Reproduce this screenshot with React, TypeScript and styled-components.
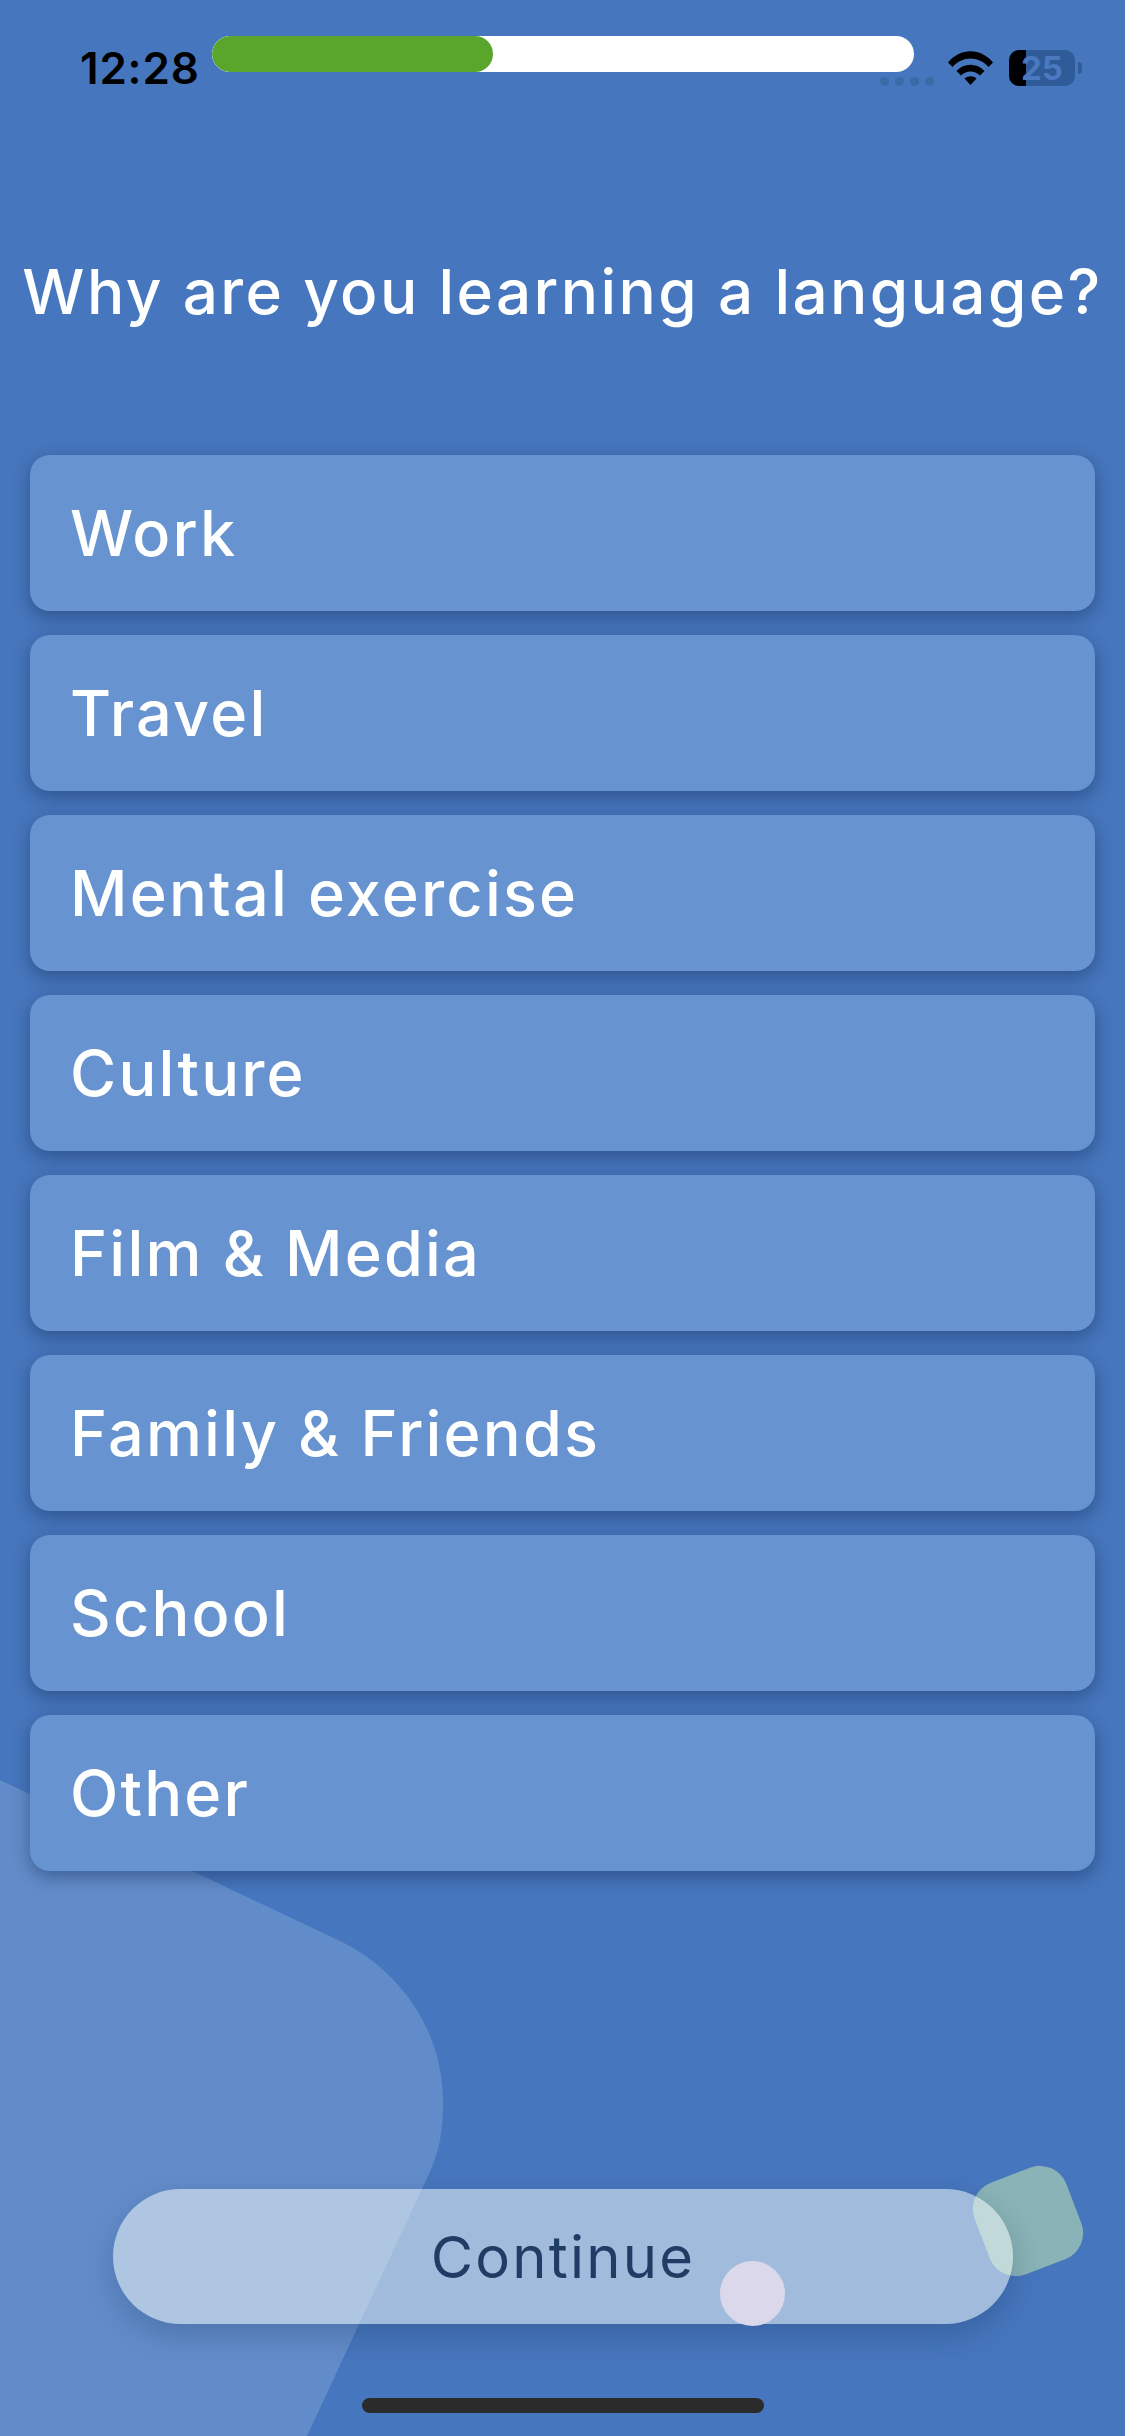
import React from 'react'
import styled, { createGlobalStyle } from 'styled-components'

const OPTIONS = ['Work', 'Travel', 'Mental exercise', 'Culture', 'Film & Media', 'Family & Friends', 'School', 'Other']

const GlobalStyle = createGlobalStyle`
  html, body {
    margin: 0;
    padding: 0;
    background: #4676bd;
  }
  * {
    box-sizing: border-box;
  }
`

const Screen = styled.div`
  position: relative;
  width: 1125px;
  height: 2436px;
  overflow: hidden;
  background: #4676bd;
  font-family: Inter, 'Liberation Sans', sans-serif;
`

const Blob = styled.svg`
  position: absolute;
  left: 0;
  top: 0;
`

const GreenSquare = styled.div`
  position: absolute;
  left: 979px;
  top: 2172px;
  width: 98px;
  height: 98px;
  border-radius: 28px;
  background: #89b3b6;
  transform: rotate(-21deg);
`

const Dot = styled.div`
  position: absolute;
  left: 720px;
  top: 2261px;
  width: 65px;
  height: 65px;
  border-radius: 50%;
  background: #dcd8ec;
  z-index: 2;
`

const Content = styled.div`
  position: relative;
  z-index: 1;
  display: flex;
  flex-direction: column;
  height: 100%;
`

const StatusBar = styled.div`
  display: flex;
  justify-content: space-between;
  align-items: center;
  height: 36px;
  margin-top: 50px;
  padding: 0 43px 0 80px;
`

const Time = styled.span`
  font-size: 44px;
  font-weight: 600;
  line-height: 36px;
  color: #000;
  letter-spacing: 0.8px;
`

const StatusIcons = styled.div`
  display: flex;
  align-items: center;
`

const SignalDots = styled.div`
  display: flex;
  gap: 6px;
  margin: 26px 14px 0 0;
`

const SignalDot = styled.i`
  display: block;
  width: 9px;
  height: 9px;
  border-radius: 50%;
  background: #3c6aa6;
`

const Battery = styled.div`
  position: relative;
  display: flex;
  align-items: center;
  justify-content: center;
  width: 66px;
  height: 36px;
  margin-left: 16px;
  border-radius: 10px;
  background: #2f5b98;
`

const BatteryLevel = styled.div`
  position: absolute;
  left: 0;
  top: 0;
  bottom: 0;
  width: 17px;
  border-radius: 10px 0 0 10px;
  background: #000;
`

const BatteryText = styled.span`
  position: relative;
  font-size: 33px;
  font-weight: 700;
  line-height: 36px;
  color: #4a79bf;
`

const BatteryNub = styled.div`
  width: 4px;
  height: 12px;
  margin-left: 3px;
  border-radius: 0 4px 4px 0;
  background: #2f5b98;
`

const Progress = styled.div`
  position: absolute;
  left: 212px;
  top: 36px;
  width: 702px;
  height: 36px;
  border-radius: 18px;
  background: #fff;
  overflow: hidden;
`

const ProgressFill = styled.div`
  height: 100%;
  border-radius: 18px;
  background: #5aa52c;
`

const Title = styled.h1`
  margin: 168px 0 0;
  font-size: 62px;
  font-weight: 500;
  line-height: 76px;
  letter-spacing: 2.4px;
  color: #fff;
  text-align: center;
  white-space: nowrap;
`

const OptionList = styled.div`
  display: flex;
  flex-direction: column;
  gap: 24px;
  margin: 125px 30px 0;
`

const Option = styled.div`
  display: flex;
  align-items: center;
  height: 156px;
  padding-left: 40px;
  border-radius: 20px;
  background: #6793d0;
  box-shadow: 0 6px 18px rgba(15, 35, 75, 0.42);
  font-size: 63px;
  font-weight: 500;
  letter-spacing: 2.2px;
  color: #fff;
`

const ContinueButton = styled.div`
  display: flex;
  align-items: center;
  justify-content: center;
  width: 900px;
  height: 135px;
  margin: 318px 0 0 113px;
  border-radius: 68px;
  background: rgba(252, 255, 252, 0.5);
  box-shadow: 0 12px 30px rgba(15, 35, 75, 0.22);
  font-size: 58px;
  font-weight: 400;
  letter-spacing: 2.2px;
  color: #1e3c64;
`

const HomeIndicator = styled.div`
  width: 402px;
  height: 15px;
  margin: 74px 0 0 362px;
  border-radius: 8px;
  background: #2b2b2b;
`

export default function App() {
  const progress = 40

  return (
    <Screen>
      <GlobalStyle />
      <Blob width="1125" height="2436" viewBox="0 0 1125 2436">
        <path
          d="M0 1780 L336 1939 C405 1971 443 2036 443 2101 C443 2130 440 2150 429 2174 L307 2436 L0 2436 Z"
          fill="#628cc9"
        />
      </Blob>
      <GreenSquare />
      <Content>
        <StatusBar>
          <Time>12:28</Time>
          <StatusIcons>
            <SignalDots>
              <SignalDot />
              <SignalDot />
              <SignalDot />
              <SignalDot />
            </SignalDots>
            <svg width="45" height="34" viewBox="0 0 45 34">
              <path d="M0 11.5 C12.5 -3.5 32.5 -3.5 45 11.5 L40.5 16 C30.5 4.5 14.5 4.5 4.5 16 Z" />
              <path d="M8.5 20 C16 11.5 29 11.5 36.5 20 L32 24.5 C26.5 19 18.5 19 13 24.5 Z" />
              <path d="M16.5 27.5 C20 24.5 25 24.5 28.5 27.5 L22.5 34 Z" />
            </svg>
            <Battery>
              <BatteryLevel />
              <BatteryText>25</BatteryText>
            </Battery>
            <BatteryNub />
          </StatusIcons>
        </StatusBar>
        <Title>Why are you learning a language?</Title>
        <OptionList>
          {OPTIONS.map(option => (
            <Option key={option}>{option}</Option>
          ))}
        </OptionList>
        <ContinueButton>Continue</ContinueButton>
        <HomeIndicator />
      </Content>
      <Progress>
        <ProgressFill style={{ width: `${progress}%` }} />
      </Progress>
      <Dot />
    </Screen>
  )
}
